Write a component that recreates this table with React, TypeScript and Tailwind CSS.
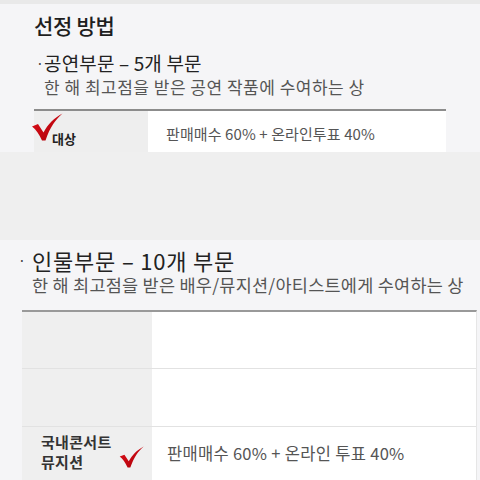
const font = "font-['Noto_Sans_CJK_KR','Noto_Sans',sans-serif]";

function Check({ className }: { className: string }) {
  return (
    <svg viewBox="0 0 32 28" className={className}>
      <defs>
        <linearGradient id="chk" x1="0" y1="0" x2="1" y2="1">
          <stop offset="0" stopColor="#e0101a" />
          <stop offset="1" stopColor="#a80008" />
        </linearGradient>
      </defs>
      <path
        d="M1 13.5 L7 11 L12.5 19.5 C17 11 23 5 31.5 0.5 C25 6 19 14 14.5 27.5 L11 27.5 C8 21 5 16.5 1 13.5 Z"
        fill="url(#chk)"
      />
    </svg>
  );
}

export default function App() {
  return (
    <div className={`flex h-[480px] w-[480px] flex-col overflow-hidden bg-[#ededed] ${font}`}>
      <div className="h-[4px] shrink-0 bg-[#e9e9e9]" />

      <div className="h-[148px] shrink-0 overflow-hidden bg-[#f5f5f7] pl-[34px] pr-[34px] pt-[7px]">
        <div className="h-[28px] text-[21px] font-medium leading-[28px] tracking-[-0.3px] text-[#1e1e1e]">
          선정 방법
        </div>
        <div className="mt-[12px] flex h-[24px] items-center text-[19px] leading-[24px] tracking-[0.15px] text-[#222]">
          <span className="w-[10px] pl-[2px] text-[14px] text-[#444]">·</span>
          <span>공연부문 – 5개 부문</span>
        </div>
        <div className="mt-[1px] h-[22px] pl-[10px] text-[17px] leading-[22px] tracking-[0.5px] text-[#555]">
          한 해 최고점을 받은 공연 작품에 수여하는 상
        </div>
        <div className="mt-[11px] flex h-[48px] border-t-2 border-[#8c8c8c]">
          <div className="relative w-[114px] bg-[#eeeeee]">
            <Check className="absolute left-[-3px] top-[2px] h-[28px] w-[32px]" />
            <span className="absolute left-[18px] top-[19px] text-[13px] font-bold leading-[18px] text-[#222]">
              대상
            </span>
          </div>
          <div className="flex flex-1 items-center bg-white pl-[18px] text-[15px] tracking-[0.1px] text-[#555]">
            판매매수 60% + 온라인투표 40%
          </div>
        </div>
      </div>

      <div className="h-[88px] shrink-0 bg-[#efefef]" />

      <div className="flex-1 bg-[#f5f5f7] pt-[6px]">
        <div className="flex h-[28px] items-center pl-[18px] text-[22px] leading-[28px] tracking-[0.8px] text-[#222]">
          <span className="w-[14px] text-[14px] text-[#444]">·</span>
          <span>인물부문 – 10개 부문</span>
        </div>
        <div className="h-[22px] pl-[32px] text-[17.5px] leading-[22px] tracking-[0.25px] text-[#555]">
          한 해 최고점을 받은 배우/뮤지션/아티스트에게 수여하는 상
        </div>
        <div className="ml-[22px] mr-[3px] mt-[14px] border-r border-t-2 border-r-[#e6e6e6] border-t-[#999]">
          <div className="flex h-[57px] border-b border-[#e2e2e2]">
            <div className="w-[130px] bg-[#efefef]" />
            <div className="flex-1 bg-white" />
          </div>
          <div className="flex h-[58px] border-b border-[#e2e2e2]">
            <div className="w-[130px] bg-[#efefef]" />
            <div className="flex-1 bg-white" />
          </div>
          <div className="flex h-[60px]">
            <div className="relative w-[130px] bg-[#efefef] pl-[19px] pt-[5px] text-[15px] font-bold leading-[20px] tracking-[0.3px] text-[#333]">
              <div>국내콘서트</div>
              <div>뮤지션</div>
              <Check className="absolute left-[96px] top-[19px] h-[22px] w-[27px]" />
            </div>
            <div className="flex flex-1 items-start bg-white pl-[15px] pt-[14px] text-[16.5px] leading-[24px] tracking-[0.3px] text-[#555]">
              판매매수 60% + 온라인 투표 40%
            </div>
          </div>
        </div>
      </div>
    </div>
  );
}
